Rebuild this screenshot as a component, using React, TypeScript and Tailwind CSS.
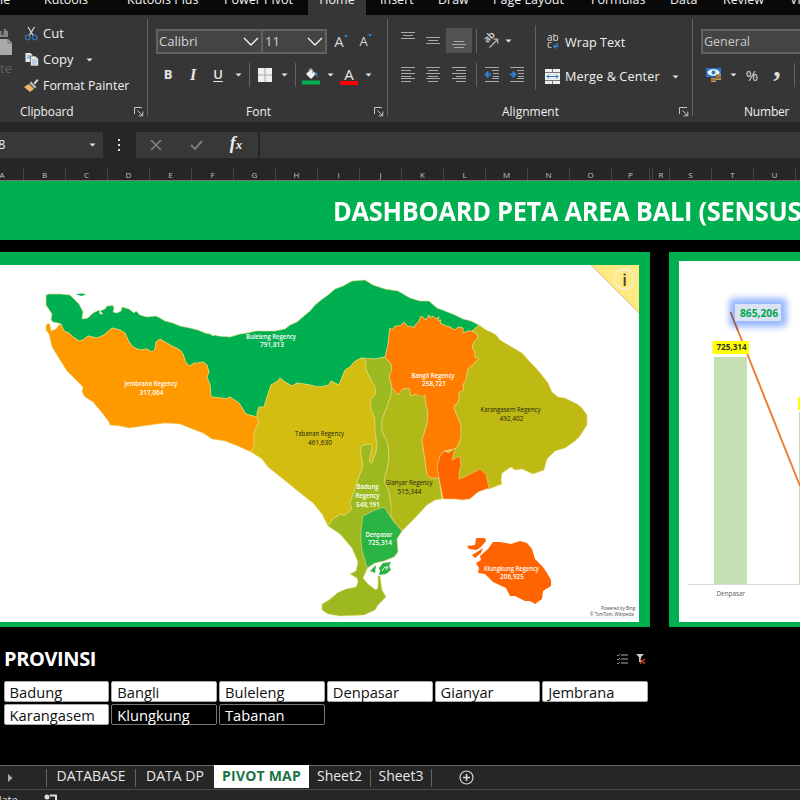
import React from "react";

type P = { className?: string; children?: React.ReactNode };

const Cell = ({ className = "", children }: P) => (
  <div className={`flex h-full shrink-0 items-center justify-center ${className}`}>{children}</div>
);

const Caret = () => (
  <svg width="7" height="4" viewBox="0 0 7 4" className="shrink-0"><path d="M.5 .5h6L3.5 3.6z" fill="#e6e6e6" /></svg>
);

const Sep = ({ className = "h-6" }: P) => <div className={`w-px shrink-0 bg-[#646464] ${className}`} />;

const Chevron = () => (
  <svg width="16" height="10" viewBox="0 0 16 10" fill="none" stroke="#f0f0f0" strokeWidth="1.4"><path d="M1 1l7 7 7-7" /></svg>
);

const Launcher = () => (
  <svg width="10" height="10" viewBox="0 0 10 10" fill="none" stroke="#c4c4c4" strokeWidth="1"><path d="M.5 7V.5H8M3.5 3.5l5 5M8.8 4.5v4.3H4.5" /></svg>
);

const Lines = ({ rows, blue }: { rows: number[][]; blue?: "left" | "right" }) => (
  <svg width="16" height="18" viewBox="0 0 16 18" fill="none" stroke="#a9a9a9" strokeWidth="1">
    {rows.map(([y, a, b], i) => <path key={i} d={`M${a} ${y}H${b}`} />)}
    {blue === "left" && <path d="M7 8.5H2M4.5 5.5l-3 3 3 3" stroke="#2f7fd0" strokeWidth="1.8" />}
    {blue === "right" && <path d="M1 8.5h5M3.5 5.5l3 3-3 3" stroke="#2f7fd0" strokeWidth="1.8" />}
  </svg>
);

const indentRows = [[1.5, 1, 15], [4.5, 8, 15], [7.5, 9, 15], [10.5, 9, 15], [12.5, 8, 15], [15.5, 1, 15]];

function TabStrip() {
  const tab = "shrink-0 whitespace-nowrap";
  return (
    <div className="flex h-[15px] overflow-hidden bg-[#090909] text-[12.5px] leading-[18px] text-[#f2f2f2]">
      <div className="flex h-[18px] w-[308px] shrink-0 -translate-y-[9px]">
        <span className={`${tab} w-[44px]`}>le</span>
        <span className={`${tab} w-[83px]`}>Kutools</span>
        <span className={`${tab} w-[97px]`}>Kutools Plus</span>
        <span className={`${tab} w-[84px]`}>Power Pivot</span>
      </div>
      <div className="flex w-[58px] shrink-0 justify-center bg-[#363636]"><span className="-translate-y-[9px]">Home</span></div>
      <div className="flex h-[18px] -translate-y-[9px] pl-[14px]">
        <span className={`${tab} w-[58px]`}>Insert</span>
        <span className={`${tab} w-[55px]`}>Draw</span>
        <span className={`${tab} w-[98px]`}>Page Layout</span>
        <span className={`${tab} w-[79px]`}>Formulas</span>
        <span className={`${tab} w-[53px]`}>Data</span>
        <span className={`${tab} w-[67px]`}>Review</span>
        <span className={tab}>View</span>
      </div>
    </div>
  );
}

function Clipboard() {
  return (
    <div className="flex w-[147px] shrink-0 flex-col">
      <div className="flex pt-[5px] text-[12.4px]">
        <div className="flex w-[24px] flex-col overflow-hidden pt-[9px]">
          <svg width="13" height="28" viewBox="0 0 13 28"><path d="M0 2h4V0h2v2h2v6H0z" fill="#858585" /><path d="M1 2h3v4H1z" fill="#505050" /><path d="M0 10h8l4 4v12H0z" fill="#a9a9a9" /><path d="M8 10v4h4" stroke="#777" fill="none" /></svg>
          <span className="pt-[3px] text-[13px] leading-[16px] text-[#606060]">te</span>
        </div>
        <div className="flex flex-col">
          <div className="flex h-[26px] items-center">
            <svg width="15" height="15" viewBox="0 0 15 15" fill="none" className="mr-1"><path d="M4 1l5.5 9M10.5 1L5 10" stroke="#d8d8d8" strokeWidth="1.3" /><circle cx="3.7" cy="11.5" r="2.3" stroke="#3576b5" strokeWidth="1.3" /><circle cx="10.8" cy="11.5" r="2.3" stroke="#3576b5" strokeWidth="1.3" /></svg>
            <span className="pt-px text-[13px]">Cut</span>
          </div>
          <div className="flex h-[27px] items-center">
            <svg width="15" height="15" viewBox="0 0 15 15" className="mr-1"><path d="M1.5 1h5l2 2v7h-7z" fill="#e8e8e8" /><path d="M3 4h4M3 6h4" stroke="#4d93d9" /><path d="M6.500 4h5l3 3v7h-8z" fill="#e8e8e8" stroke="#363636" strokeWidth=".6" /><path d="M8 8h5M8 10h5M8 12h4" stroke="#8bb8e6" /></svg>
            <span className="w-[43px] text-[13px]">Copy</span><Caret />
          </div>
          <div className="flex h-[26px] items-center">
            <svg width="15" height="14" viewBox="0 0 15 14" className="mr-1"><path d="M9.500 4L13 0l1.500 1.500L11 5.500z" fill="#d5d5d5" /><path d="M7 2.500L12.500 8l-2 1.500L5.500 4z" fill="#bdbdbd" /><path d="M5 5l5 5-4 3L0 8z" fill="#e9b66b" /></svg>
            <span className="whitespace-nowrap">Format Painter</span>
          </div>
        </div>
      </div>
      <div className="mt-auto flex h-[21px] items-center pl-[20px]">
        <span className="w-[114px] tracking-[-0.1px]">Clipboard</span><Launcher />
      </div>
    </div>
  );
}

function FontGroup() {
  return (
    <div className="flex w-[239px] shrink-0 flex-col pt-[14px]">
      <div className="flex h-[25px] items-center pl-2 text-[13px] text-[#d4d4d4]">
        <div className="flex h-[25px] w-[107px] items-center justify-between border-2 border-[#626262] bg-[#444] pr-[2px] pl-[1px]"><span>Calibri</span><Chevron /></div>
        <div className="-ml-[2px] flex h-[25px] w-[66px] items-center justify-between border-2 border-[#626262] bg-[#444] pr-[2px] pl-[2px]"><span>11</span><Chevron /></div>
        <Cell className="w-[26px] pl-[2px] text-[15px]"><span>A</span><svg width="4" height="3" viewBox="0 0 4 3" className="mb-3"><path d="M0 3l2-3 2 3z" fill="#2f7fd0" /></svg></Cell>
        <Cell className="w-[25px] text-[13px]"><span className="pt-px">A</span><svg width="4" height="3" viewBox="0 0 4 3" className="mb-3"><path d="M0 0l2 3 2-3z" fill="#2f7fd0" /></svg></Cell>
      </div>
      <div className="mt-[9px] flex h-6 items-center pl-2 text-[13px] text-[#e8e8e8]">
        <Cell className="w-6 font-bold">B</Cell>
        <Cell className="w-[26px] font-['Liberation_Serif',serif] text-[16px] font-bold italic">I</Cell>
        <Cell className="w-6 font-semibold underline underline-offset-2">U</Cell>
        <Cell className="w-4"><Caret /></Cell>
        <Cell className="w-[6px]"><Sep /></Cell>
        <Cell className="w-[26px]"><svg width="14" height="14" viewBox="0 0 14 14"><path d="M0 0h14v14H0z" fill="#f0f0f0" /><path d="M7 0v14M0 7h14" stroke="#a8a8a8" /></svg></Cell>
        <Cell className="w-3"><Caret /></Cell>
        <Cell className="w-[10px]"><Sep /></Cell>
        <Cell className="w-[21px] pt-[2px]"><svg width="18" height="18" viewBox="0 0 18 18"><path d="M9 2l5 5-5 5-5-5z" fill="#f3f3f3" /><path d="M7 5V2.500a2 2 0 0 1 3.500 0V6" fill="none" stroke="#999" /><path d="M13 5c2 0 3 2 2.500 6-1-3-2-3-3-3z" fill="#3f86cf" /><path d="M0 13.500h18v4H0z" fill="#00b050" /></svg></Cell>
        <Cell className="w-[18px]"><Caret /></Cell>
        <Cell className="w-5 flex-col pt-[2px]"><span className="text-[15px] leading-[12px]">A</span><span className="mt-px h-1 w-[18px] bg-[#f00]" /></Cell>
        <Cell className="w-[18px]"><Caret /></Cell>
      </div>
      <div className="mt-auto flex h-[21px] items-center pl-[98px]"><span className="w-[128px]">Font</span><Launcher /></div>
    </div>
  );
}

function Alignment() {
  return (
    <div className="flex w-[304px] shrink-0 flex-col pt-[10px]">
      <div className="flex h-[65px]">
        <div className="flex w-[147px] flex-col pt-[3px] pl-2">
          <div className="flex h-[25px] items-center">
            <Cell className="w-6 pb-2"><Lines rows={[[4.500, 1, 15], [7.500, 3, 13], [10.500, 1, 15]]} /></Cell>
            <Cell className="w-[26px]"><Lines rows={[[5.500, 1, 15], [8.500, 3, 13], [11.500, 1, 15]]} /></Cell>
            <Cell className="w-[26px] bg-[#525252]"><Lines rows={[[9.500, 3, 13], [12.500, 1, 15], [15.500, 3, 13]]} /></Cell>
            <Cell className="w-2"><Sep /></Cell>
            <Cell className="w-6"><svg width="16" height="16" viewBox="0 0 16 16"><text x="3" y="10.500" fontSize="9.500" fontWeight="600" fill="#dedede" transform="rotate(-45 3 10)">ab</text><path d="M5.500 14.500l8-8M9.500 6.200h4.200v4.300" fill="none" stroke="#b8b8b8" strokeWidth="1.200" /></svg></Cell>
            <Cell className="w-2"><Caret /></Cell>
          </div>
          <div className="mt-[10px] flex h-6 items-center">
            <Cell className="w-6"><Lines rows={[[1.500, 1, 15], [4.500, 1, 11], [7.500, 1, 15], [10.500, 1, 11], [12.500, 1, 15], [15.500, 1, 11]]} /></Cell>
            <Cell className="w-[26px]"><Lines rows={[[1.500, 1, 15], [4.500, 3, 13], [7.500, 1, 15], [10.500, 3, 13], [12.500, 1, 15], [15.500, 3, 13]]} /></Cell>
            <Cell className="w-[26px]"><Lines rows={[[1.500, 1, 15], [4.500, 5, 15], [7.500, 1, 15], [10.500, 5, 15], [12.500, 1, 15], [15.500, 5, 15]]} /></Cell>
            <Cell className="w-2"><Sep /></Cell>
            <Cell className="w-6"><Lines rows={indentRows} blue="left" /></Cell>
            <Cell className="w-[26px]"><Lines rows={indentRows} blue="right" /></Cell>
          </div>
        </div>
        <Sep className="h-[65px]" />
        <div className="flex flex-col pt-1 pl-[9px] text-[12.7px]">
          <div className="flex h-[26px] items-center">
            <svg width="20" height="16" viewBox="0 0 20 16" fill="#dedede" fontSize="10"><text x="2" y="7">ab</text><text x="2" y="14">c</text><path d="M12.500 9v3.500H9M10.800 10.500l-2 2 2 2" fill="none" stroke="#2f7fd0" strokeWidth="1.300" /></svg>
            <span className="pt-[2px]">Wrap Text</span>
          </div>
          <div className="mt-[9px] flex h-[25px] items-center">
            <svg width="15" height="15" viewBox="0 0 15 15" className="mr-[5px]"><path d="M0 0h15v15H0z" fill="#eee" /><path d="M0 3.500h15M0 11.500h15M7.500 0v3M7.500 12v3" stroke="#777" /><path d="M2 7.500h11M4 5.500l-2 2 2 2M11 5.500l2 2-2 2" fill="none" stroke="#2673c4" /></svg>
            <span className="w-[107px] pt-px whitespace-nowrap tracking-[0.1px]">Merge &amp; Center</span><Caret />
          </div>
        </div>
      </div>
      <div className="mt-auto flex h-[21px] items-center pl-[114px]"><span className="w-[177px]">Alignment</span><Launcher /></div>
    </div>
  );
}

function NumberGroup() {
  return (
    <div className="flex w-[107px] shrink-0 flex-col overflow-hidden pt-[14px]">
      <div className="ml-2 flex h-[25px] w-[150px] items-center border-2 border-[#626262] bg-[#444] pt-px pl-[1px] text-[12.500px] text-[#c8c8c8]">General</div>
      <div className="mt-[9px] flex h-6 items-center pl-2 text-[#dcdcdc]">
        <Cell className="w-[25px]"><svg width="16" height="15" viewBox="0 0 16 15"><path d="M0 0h15v9H0z" fill="#2874c7" /><ellipse cx="7.500" cy="4.500" rx="6" ry="3.300" fill="#f5f5f5" /><circle cx="7.500" cy="4.500" r="2" fill="#2874c7" /><path d="M10 6h5v6h-5zM5 10h5v4H5z" fill="#c99b5b" /><path d="M10 8h5M10 10h5M5 12h5" stroke="#5c4931" /></svg></Cell>
        <Cell className="w-[14px]"><Caret /></Cell>
        <Cell className="w-[24px] text-[15px]">%</Cell>
        <Cell className="w-[26px] font-['Liberation_Serif',serif] text-[30px] leading-none font-bold"><span className="-mt-[19px]">,</span></Cell>
        <Cell className="w-[8px]"><Sep /></Cell>
      </div>
      <div className="mt-auto flex h-[21px] items-center pl-[51px] tracking-[-0.2px]">Number</div>
    </div>
  );
}

const columns: [string, string][] = [
  ["A", "w-[24px] pr-[19px]"], ["B", "w-[42px]"], ["C", "w-[42px]"], ["D", "w-[42px]"], ["E", "w-[42px]"], ["F", "w-[42px]"], ["G", "w-[42px]"], ["H", "w-[42px]"], ["I", "w-[42px]"], ["J", "w-[42px]"], ["K", "w-[42px]"], ["L", "w-[42px]"], ["M", "w-[42px]"], ["N", "w-[42px]"], ["O", "w-[42px]"], ["P", "w-[38px]"], ["", "w-[3px]"], ["R", "w-[17px]"], ["S", "w-[42px]"], ["T", "w-[42px]"], ["U", "w-[42px]"], ["", "w-[5px]"],
];

function FormulaArea() {
  return (
    <>
      <div className="flex h-[46px] items-center bg-[#262626] text-[#eee]">
        <div className="flex h-[26px] w-[103px] items-center bg-[#383838] text-[13px]"><span className="-ml-[2px] w-[91px]">8</span><Caret /></div>
        <div className="flex w-[33px] flex-col items-center gap-[3px] pr-[2px]">{[0, 1, 2].map(i => <span key={i} className="size-[2px] bg-[#ddd]" />)}</div>
        <div className="flex h-[26px] w-[122px] items-center bg-[#383838]">
          <Cell className="w-[40px]"><svg width="12" height="10" viewBox="0 0 12 10"><path d="M1 0l10 10M11 0L1 10" stroke="#858585" strokeWidth="1.500" /></svg></Cell>
          <Cell className="w-[40px]"><svg width="13" height="10" viewBox="0 0 13 10"><path d="M1 5l4 4 7-8" fill="none" stroke="#7c7c7c" strokeWidth="2" /></svg></Cell>
          <Cell className="w-[40px] font-['Liberation_Serif',serif] text-[18px] font-bold italic"><span className="-mt-[3px]">f<span className="text-[13px]">x</span></span></Cell>
        </div>
        <div className="ml-[2px] h-[26px] flex-1 bg-[#383838]" />
      </div>
      <div className="flex h-[13px] border-b border-[#777] bg-[#262626] text-[8px] leading-[13px] text-[#c4c4c4]">
        {columns.map(([c, w], i) => <div key={i} className={`flex shrink-0 justify-center border-r border-[#444] ${w}`}>{c}</div>)}
      </div>
    </>
  );
}

const JB = "257,417 246,414 239,403 230,397 226,399 222,398 211,397 210,385 207,377 209,372 207,365 203,362 198,363 194,363 190,366 186,363 183,354 180,350 172,346 165,342 160,339 156,342 155,349 152,352 147,349 140,350 133,347 129,342 125,333 120,330 112,328 104,335 97,338 88,336 83,340 79,341 73,337 69,333 64,331 61,324";
const TB = "361,358 354,362 350,367 345,370 341,380 339,385 331,381 329,385 325,386 318,387 310,385 297,383 292,386 285,382 280,378 278,381 271,385 267,397 264,407 259,407 257,413 257,417";
const BB = "472,331 468,331 463,333 463,328 458,327 455,330 450,327 446,326 440,323 441,320 438,321 439,317 436,319 433,316 430,318 429,315 426,320 421,316 418,323 415,325 414,328 410,326 408,327 404,322 400,326 395,326 392,330 390,328 389,335 388,345 385,357";
const BK = "472,331 477,334 478,338 474,342 472,347 475,352 475,357 479,358 475,363 468,369 466,380 463,385 464,388 462,392 459,392 459,400 457,404 455,405 454,408 458,418 461,425 461,437 458,446 455,449";
const rev = (s: string) => s.split(" ").reverse().join(" ");

const regions: [string, string][] = [
  ["#00b050", `46,295 49,294 60,294 70,295 73,298 79,304 83,312 82,319 88,318 93,313 99,310 100,314 103,314 100,311 105,309 107,306 113,305.5 114,308 113,312 117,313 121,311 122,307 129,309 134,313 136,311 140,315 147,317 156,316 160,318 165,321 173,323 180,326 190,328 198,330 205,333 210,334 213,336 215,335 218,336 230,337 240,334 247,333 256,331 275,331 285,329 290,325 297,322 305,315 310,311 315,305 321,300 328,295 335,289 343,286 352,281 365,280 373,285 385,289 398,291 410,298 420,301 429,301 437,308 445,311 455,315 463,319 471,321 479,325 ${BB} 375,359 ${TB} ${JB} 58,323 53,322 51,320 52,314 46,305`],
  ["#ff9900", `${JB} 58,326 56,329 51,331 50,325 48,323 46,326 46,330 49,334 52,347 60,360 67,371 76,380 83,387 82,392 85,397 93,402 103,414 109,422 110,425 120,426 129,428 150,425 165,423 180,424 195,430 203,433 212,439 225,441 240,447 251,452 254,446 254,432 259,422`],
  ["#d3bd10", `${TB} 259,422 254,432 254,446 251,452 262,459 268,467 283,479 299,492 313,503 322,514 328,526 333,519 341,514 344,516 352,509 350,503 354,492 359,477 363,466 361,455 361,447 364,445 371,444 372,448 369,461 372,463 376,452 377,446 375,430 375,419 371,409 371,399 376,394 375,387 370,378 366,369 366,361`],
  ["#9cba20", `361,358 375,359 385,357 391,364 392,369 389,376 391,385 392,388 391,395 386,409 382,420 382,431 388,444 389,458 387,470 384,480 389,492 391,505 402,531 367,569 363,578 368,584 376,590 378,588 378,576 380,576 382,590 386,597 378,605 375,610 364,615 340,616 328,614 322,610 322,604 329,600 335,595 337,593 346,589 356,587 358,582 357,578 350,574 356,571 358,562 352,548 340,534 328,526 333,519 341,514 344,516 352,509 350,503 354,492 359,477 363,466 361,455 361,447 364,445 371,444 372,448 369,461 372,463 376,452 377,446 375,430 375,419 371,409 371,399 376,394 375,387 370,378 366,369 366,361`],
  ["#afba18", "391,395 392,388 398,395 403,389 409,388 411,396 416,394 425,395 426,405 428,412 427,424 422,440 425,460 427,475 431,478 439,478 442,499 435,500 427,505 415,518 402,531 391,517 391,505 389,492 384,480 387,470 389,458 388,444 382,431 382,420 386,409"],
  ["#ff7d00", `${rev(BB)} ${BK} 444,451 440,456 438,466 439,478 431,478 427,475 425,460 422,440 427,424 428,412 426,405 425,395 422,397 416,394 411,396 409,388 403,389 398,395 392,388 389,376 392,369 391,364`],
  ["#bfba13", `479,325 486,330 491,332 496,335 500,340 510,346 522,353 530,362 535,367 541,374 548,383 552,392 558,397 565,398 577,404 582,408 587,415 587,425 580,436 575,441 565,448 555,451 547,459 544,470 533,474 522,469 515,470 511,467 502,473 501,480 502,484 489,489 458,485 445,452 455,449 ${rev(BK)}`],
  ["#ff6400", "444,451 449,453 455,448 453,456 452,460 460,456 461,466 459,472 459,479 465,477 470,474 480,469 486,474 489,488 478,492 470,499 462,500 455,499 443,499 439,478 437,466 440,456"],
  ["#2bb344", "384,507 375,510 369,513 363,516 361,530 361,540 362,551 365,560 367,568 375,563 384,561 394,557 398,552 397,539 402,531 394,522 388,513"],
];
const islets: [string, string][] = [
  ["#00b050", "76,294.5 80,293.5 86,294 82,296"],
  ["#2bb344", "370,571 376,565 375,573"],
  ["#2bb344", "379,568 383,563 391,562 389,566 391,570 386,574 379,575 380,571"],
  ["#ff6400", "467,546 475,545 476,538 485,538 486,541 480,548 476,550 469,549"],
  ["#ff6400", "472,555 477,552 483,548 481,553 475,558"],
  ["#ff6400", "493,542 500,542 511,544 520,541 527,543 532,549 535,559 543,567 547,573 551,580 551,586 543,591 542,599 535,604 530,601 525,601 515,596 510,596 506,588 493,582 485,574 478,573 479,568 476,563 481,560 480,556 488,549"],
];
const labels: [string, number, number, number, string][] = [
  ["Buleleng Regency", 271, 338.500, 50, "#fff"], ["791,813", 272, 347, 24, "#fff"],
  ["Jembrana Regency", 151, 385.500, 53, "#fff"], ["317,064", 151.500, 394.500, 24, "#fff"],
  ["Tabanan Regency", 319.500, 436, 49, "#202010"], ["461,630", 320, 444.500, 24, "#202010"],
  ["Bangli Regency", 433, 377.500, 43, "#fff"], ["258,721", 434, 386, 24, "#fff"],
  ["Karangasem Regency", 510.500, 412, 60, "#202010"], ["492,402", 511.500, 420.500, 24, "#202010"],
  ["Badung", 367.500, 489, 22, "#fff"], ["Regency", 367.500, 498, 24, "#fff"], ["548,191", 368, 506.500, 24, "#fff"],
  ["Gianyar Regency", 409, 484.500, 47, "#202010"], ["515,344", 409.500, 493.500, 24, "#202010"],
  ["Denpasar", 379, 537, 27, "#fff"], ["725,314", 380, 545, 24, "#fff"],
  ["Klungkung Regency", 511.500, 570.500, 55, "#fff"], ["206,925", 512, 579, 24, "#fff"],
];

function MapChart() {
  return (
    <svg width="639" height="357" viewBox="0 265 639 357" className="bg-white font-['Open_Sans',sans-serif]">
      {regions.map(([c, p], i) => <polygon key={i} points={p} fill={c} stroke="#e2d77b" strokeWidth=".6" strokeLinejoin="round" />)}
      {islets.map(([c, p], i) => <polygon key={i} points={p} fill={c} />)}
      <path d="M382 571l3-4 3 0-2 3" stroke="#fff" strokeWidth="1" fill="none" />
      <circle cx="57.500" cy="270" r=".6" fill="#a8d8bd" />
      {labels.map(([t, x, y, w, c], i) => (
        <text key={i} x={x} y={y} textAnchor="middle" textLength={w} lengthAdjust="spacingAndGlyphs" fontSize="6.700" fontWeight={c === "#fff" ? 600 : 500} fill={c}>{t}</text>
      ))}
      <g fontSize="4.800" fill="#444"><text x="601" y="610" textLength="34" lengthAdjust="spacingAndGlyphs">Powered by Bing</text><text x="590" y="616" textLength="44" lengthAdjust="spacingAndGlyphs">© TomTom, Wikipedia</text></g>
      <path d="M591 265h48v48z" fill="#ffe983" /><path d="M591 265l48 48" stroke="#dfb98a" />
      <circle cx="624.500" cy="279" r="10" fill="none" stroke="#f3efdf" strokeWidth="1.300" />
      <path d="M623.700 277h2v9h-2zM623.700 273.500h2v2h-2z" fill="#4a4530" />
    </svg>
  );
}

function BarChart() {
  return (
    <svg width="121" height="361" viewBox="679 261 121 361" className="bg-white font-['Open_Sans',sans-serif]">
      <defs><filter id="glow" x="-50%" y="-100%" width="200%" height="300%"><feGaussianBlur stdDeviation="3.200" /></filter></defs>
      <path d="M714 357h33v227h-33zM799 412h2v172h-2z" fill="#c5e0b4" />
      <path d="M688 584.500h112" stroke="#d9d9d9" />
      <path d="M730.500 312L800 486" stroke="#ed7d31" strokeWidth="1.900" />
      <rect x="729" y="298" width="58" height="29" rx="5" fill="#5b8cff" opacity=".62" filter="url(#glow)" />
      <rect x="735" y="304" width="46" height="17" fill="#dbe3f3" />
      <path d="M730.500 312L738 331" stroke="#a65b50" strokeWidth="1.500" />
      <path d="M712.500 341H749v13h-36.500zM798 397h3v13h-3z" fill="#ff0" />
      <text x="740" y="316.700" fontSize="10" fontWeight="700" fill="#00a64b" textLength="38" lengthAdjust="spacingAndGlyphs">865,206</text>
      <text x="716.500" y="350.300" fontSize="8" fontWeight="700" fill="#333" textLength="30" lengthAdjust="spacingAndGlyphs">725,314</text>
      <text x="716.500" y="596.300" fontSize="7" fill="#595959" textLength="28.500" lengthAdjust="spacingAndGlyphs">Denpasar</text>
    </svg>
  );
}

const slicer = ["Badung", "Bangli", "Buleleng", "Denpasar", "Gianyar", "Jembrana", "Karangasem", "Klungkung", "Tabanan"];

export default function App() {
  return (
    <div className="flex h-[800px] w-[800px] flex-col overflow-hidden bg-black font-['Open_Sans','Noto_Sans',sans-serif]">
      <TabStrip />
      <div className="flex h-[107px] bg-[#363636] text-[12px] text-[#f0f0f0]">
        <Clipboard /><Sep className="mt-1 h-[97px]" />
        <FontGroup /><Sep className="mt-1 h-[97px]" />
        <Alignment /><Sep className="mt-1 h-[97px]" />
        <NumberGroup />
      </div>
      <FormulaArea />
      <div className="flex h-[59px] items-center overflow-hidden bg-[#00b050] pt-[2px] pl-[333px] text-[26px] font-bold whitespace-nowrap text-white"><span className="origin-left scale-x-[0.978] tracking-[-0.3px]">DASHBOARD PETA AREA BALI (SENSUS</span></div>
      <div className="flex gap-[19px] pt-3">
        <div className="h-[375px] w-[650px] bg-[#00b050] pt-[13px]"><MapChart /></div>
        <div className="h-[375px] w-[131px] bg-[#00b050] pt-[9px] pl-[10px]"><BarChart /></div>
      </div>
      <div className="flex h-[54px] items-center pt-[9px] pl-1 text-white">
        <span className="w-[613px] text-[20px] font-bold tracking-[-0.4px]">PROVINSI</span>
        <svg width="30" height="12" viewBox="0 0 30 12" fill="none"><path d="M4 2h7M4 6h7M4 10h7" stroke="#aaa" /><path d="M0 2l1 1 2-2M0 6l1 1 2-2M0 10l1 1 2-2" stroke="#aaa" strokeWidth=".8" /><path d="M19 1h8l-3 3v5h-2V4z" fill="#d0d0d0" /><path d="M23 6l5 5M28 6l-5 5" stroke="#c74420" strokeWidth="1.200" /></svg>
      </div>
      <div className="grid w-[648px] grid-cols-6 gap-x-[2px] gap-y-[2px] pl-[3.5px] text-[14.7px]">
        {slicer.map((s, i) => (
          <div key={s} className={`flex h-[21px] items-center rounded-[2px] border pt-px pl-[5px] leading-none ${i < 7 ? "border-[#aaa] bg-white text-[#111]" : "border-[#777] bg-black text-white"}`}>{s}</div>
        ))}
      </div>
      <div className="mt-auto flex h-[24px] shrink-0 items-center border-t border-[#666] bg-[#262626] text-[14px] text-[#e8e8e8]">
        <div className="flex w-[46px] pl-2"><svg width="5" height="8" viewBox="0 0 5 8"><path d="M0 0l4.500 4L0 8z" fill="#aaa" /></svg></div>
        <Sep className="h-[18px]" />
        <Cell className="w-[88px] pb-[5px]">DATABASE</Cell><Sep className="h-[18px]" />
        <Cell className="w-[78px] pb-[5px]">DATA DP</Cell>
        <Cell className="mb-[3px] h-[21px] w-[95px] bg-white pb-[2px] font-bold text-[#1a7345]"><span className="tracking-[0.2px]">PIVOT MAP</span></Cell>
        <Cell className="w-[61px] pb-[5px]">Sheet2</Cell><Sep className="h-[18px]" />
        <Cell className="w-[60px] pb-[5px]">Sheet3</Cell><Sep className="h-[18px]" />
        <Cell className="w-[69px]"><svg width="15" height="15" viewBox="0 0 15 15" fill="none" stroke="#d8d8d8" strokeWidth="1.200"><circle cx="7.500" cy="7.500" r="6.500" /><path d="M7.500 4v7M4 7.500h7" strokeWidth="1.600" /></svg></Cell>
      </div>
      <div className="flex h-[11px] shrink-0 overflow-hidden border-t border-[#484848] bg-[#262626] text-[11px] leading-[16px] text-[#e0e0e0]">
        <span className="-ml-[8px] w-[52px] pt-[2px]">plate</span>
        <svg width="13" height="12" viewBox="0 0 13 12" className="mt-[4px]"><circle cx="3" cy="3" r="2.500" fill="#ddd" /><path d="M6 1.500h6v10H1V6" fill="none" stroke="#ddd" strokeWidth="2" /></svg>
      </div>
    </div>
  );
}
